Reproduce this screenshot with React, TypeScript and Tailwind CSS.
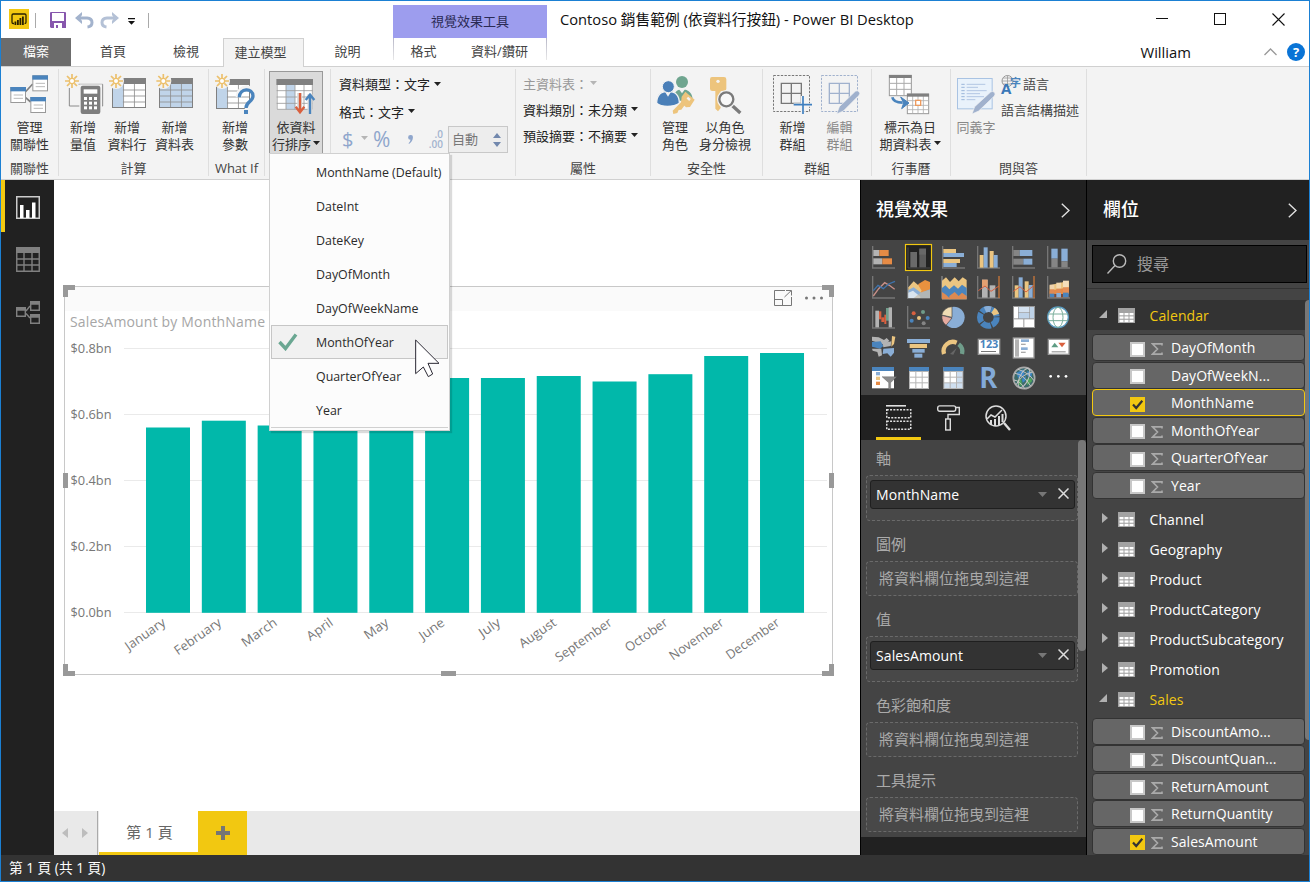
import React from 'react';

type Kids = { children?: React.ReactNode };

/* ---------- helpers ---------- */

function Art({ w, h, vb, children, cls = '' }: Kids & { w: number; h: number; vb: string; cls?: string }) {
  return (
    <svg width={w} height={h} viewBox={vb} className={`block shrink-0 overflow-visible ${cls}`} fill="none">
      {children}
    </svg>
  );
}

function Caret({ cls = 'text-[#222]' }: { cls?: string }) {
  return (
    <svg width="7" height="4" viewBox="0 0 7 4" className={`mb-[3px] inline-block shrink-0 ${cls}`}>
      <path d="M0 0H7L3.5 4Z" fill="currentColor" />
    </svg>
  );
}

/* ---------- ribbon icons (drawn at three units per pixel) ---------- */

function Burst({ x, y }: { x: number; y: number }) {
  return (
    <g transform={`translate(${x} ${y})`} stroke="#ecc06c" strokeWidth="5">
      <path d="M0 -21V-9M0 9V21M-21 0H-9M9 0H21M-15 -15L-7 -7M7 7L15 15M-15 15L-7 7M7 -7L15 -15" />
      <circle r="8" strokeWidth="4" fill="#fff" />
    </g>
  );
}

function MiniTable({ x, y, w, h, fill }: { x: number; y: number; w: number; h: number; fill: 'col' | 'all' }) {
  const c = (w - 4) / 3;
  const r = (h - 18) / 4;
  return (
    <g>
      <rect x={x} y={y} width={w} height={h} fill="#fff" />
      <rect x={x} y={y + 18} width={fill === 'all' ? w : c + 2} height={h - 18} fill="#c0d4e9" />
      <g stroke="#8f8f8f" strokeWidth="2.5">
        {[1, 2].map((i) => (
          <path key={i} d={`M${x + 2 + c * i} ${y + 18}V${y + h}`} />
        ))}
        {[1, 2, 3].map((i) => (
          <path key={i} d={`M${fill === 'all' ? x : x + c} ${y + 18 + r * i}H${x + w}`} />
        ))}
      </g>
      <rect x={x + 1.5} y={y + 1.5} width={w - 3} height={h - 3} stroke="#808080" strokeWidth="3" />
      <rect x={x} y={y} width={w} height="18" fill="#808080" />
    </g>
  );
}

const Relations = () => (
  <Art w={57} h={47} vb="3 213 171 141">
    <path d="M76 276L98 252M76 292L92 306" stroke="#808080" strokeWidth="5" />
    {[
      [31, 261],
      [97, 226],
      [91, 291],
    ].map(([x, y]) => (
      <g key={x}>
        <rect x={x + 1.5} y={y + 1.5} width="44" height="45" fill="#fff" stroke="#999" strokeWidth="3" />
        <rect x={x} y={y} width="47" height="13" fill="#4a84bd" />
        <path d={`M${x + 10} ${y + 24}H${x + 38}M${x + 10} ${y + 34}H${x + 38}`} stroke="#bbb" strokeWidth="3" />
      </g>
    ))}
  </Art>
);

const Measure = () => (
  <Art w={44} h={47} vb="183 213 132 141">
    <path d="M208 264V318H308V253H236" stroke="#8a8a8a" strokeWidth="3" />
    <rect x="238" y="253" width="68" height="90" fill="#f3f3f3" />
    <rect x="242" y="257" width="59" height="85" rx="6" fill="#7d7d7d" />
    <rect x="251" y="268" width="41" height="13" fill="#fff" />
    {[0, 1, 2].map((r) =>
      [0, 1, 2].map((c) => <rect key={`${r}${c}`} x={252 + c * 15} y={291 + r * 14} width="9" height="9" fill="#fff" />),
    )}
    <Burst x={216} y={243} />
  </Art>
);

const NewColumn = () => (
  <Art w={44} h={47} vb="315 213 132 141">
    <MiniTable x={336} y={234} w={102} h={90} fill="col" />
    <circle cx="348" cy="243" r="24" fill="#f3f3f3" />
    <Burst x={348} y={243} />
  </Art>
);

const NewTable = () => (
  <Art w={51} h={47} vb="447 213 153 141">
    <MiniTable x={477} y={234} w={102} h={90} fill="all" />
    <circle cx="490" cy="243" r="24" fill="#f3f3f3" />
    <Burst x={490} y={243} />
  </Art>
);

const NewParam = () => (
  <Art w={52} h={47} vb="627 213 156 141">
    <MiniTable x={648} y={237} w={102} h={90} fill="col" />
    <path d="M716 292C716 256 764 256 764 288C764 308 744 304 740 342" stroke="#f3f3f3" strokeWidth="18" />
    <circle cx="666" cy="243" r="24" fill="#f3f3f3" />
    <Burst x={666} y={243} />
    <path d="M718 292C718 264 759 262 759 288C759 306 738 304 738 324" stroke="#4a84bd" strokeWidth="10" />
    <rect x="732" y="330" width="12" height="12" fill="#4a84bd" />
  </Art>
);

const SortBy = () => (
  <Art w={52} h={46} vb="810 216 156 138">
    <rect x="830" y="237" width="108" height="92" fill="#fff" />
    <rect x="858" y="255" width="27" height="73" fill="#c0d4e9" />
    <path
      d="M830 272H938M830 291H938M830 310H938M858 255V328M885 255V328M912 255V328M831.5 255V328H937V255"
      stroke="#9a9a9a"
      strokeWidth="2.5"
    />
    <rect x="829" y="237" width="110" height="18" fill="#808080" />
    <path d="M899 279V332" stroke="#dadada" strokeWidth="15" />
    <path d="M930 282V342" stroke="#dadada" strokeWidth="15" />
    <path d="M900 279V336M887 320L900 337L913 320" stroke="#d9603f" strokeWidth="7" />
    <path d="M930 342V286M917 300L930 284L943 300" stroke="#4a84bd" strokeWidth="7" />
  </Art>
);

const ManageRoles = () => (
  <Art w={44} h={47} vb="9 33 132 141">
    <circle cx="96" cy="66" r="18" fill="#6fa58f" />
    <path d="M70 122C70 98 80 88 96 88C116 88 128 100 128 122Z" fill="#6fa58f" />
    <path d="M86 86L96 100L106 86Z" fill="#f3f3f3" />
    <path d="M20 130C20 105 30 94 54 94C80 94 88 108 88 130C70 142 34 142 20 130Z" fill="#4a7fb8" stroke="#f3f3f3" strokeWidth="4" />
    <path d="M44 94L54 110L64 94Z" fill="#f3f3f3" />
    <circle cx="55" cy="80" r="18" fill="#4a7fb8" stroke="#f3f3f3" strokeWidth="3" />
    <g fill="#edc47c">
      <path d="M106 95L134 119L120 141L108 142L93 128L95 110Z" />
      <path d="M96 124L68 152L70 162L82 159L86 150L94 149L104 136Z" />
    </g>
    <path d="M112 113L120 120" stroke="#f3f3f3" strokeWidth="7" />
  </Art>
);

const ViewAs = () => (
  <Art w={56} h={47} vb="141 33 168 141">
    <path d="M186 51H222Q229 51 229 58V86Q229 93 222 93H212V144L204 154L196 146V93H187Q180 93 180 86V58Q180 51 186 51Z" fill="#edc47c" />
    <circle cx="204" cy="64" r="5" fill="#f3f3f3" />
    <path d="M244 134L271 159" stroke="#7a7a7a" strokeWidth="10" />
    <circle cx="229" cy="118" r="28" fill="#f3f3f3" />
    <circle cx="229" cy="118" r="21" stroke="#7a7a7a" strokeWidth="7" fill="#f8f8f8" />
  </Art>
);

const NewGroup = () => (
  <Art w={47} h={47} vb="357 33 141 141">
    <rect x="370.5" y="46.5" width="108" height="108" stroke="#777" strokeWidth="3" strokeDasharray="7 4" />
    <path d="M394 70H454V130H394ZM424 70V130M394 100H454" stroke="#777" strokeWidth="4" />
    <path d="M458 108V162M431 135H486" stroke="#f3f3f3" strokeWidth="11" />
    <path d="M459 108V162M431 134H486" stroke="#3f7fbf" strokeWidth="5" />
  </Art>
);

const EditGroup = () => (
  <Art w={47} h={47} vb="498 33 141 141">
    <rect x="514.5" y="46.5" width="108" height="108" stroke="#a0b1cd" strokeWidth="3" strokeDasharray="7 4" />
    <path d="M538 70H598V130H538ZM568 70V130M538 100H598" stroke="#a0b1cd" strokeWidth="4" />
    <path d="M560 162L568 140L616 94Q622 90 627 95Q632 100 627 106L580 153Z" fill="#a0b1cd" stroke="#f3f3f3" strokeWidth="2" />
  </Art>
);

const MarkDate = () => (
  <Art w={77} h={47} vb="666 33 231 141">
    <rect x="718" y="46" width="66" height="61" fill="#fff" stroke="#999" strokeWidth="3" />
    <path d="M740 52V107M762 52V107M718 70H784M718 88H784" stroke="#aaa" strokeWidth="3" />
    <rect x="717" y="45" width="68" height="9" fill="#808080" />
    <rect x="772" y="102" width="64" height="59" fill="#fff" stroke="#999" strokeWidth="3" />
    <path d="M788 108V160M804 108V160M820 108V160M772 122H836M772 136H836M772 149H836" stroke="#b0b0b0" strokeWidth="2.5" />
    <rect x="771" y="101" width="66" height="9" fill="#808080" />
    <rect x="797" y="121" width="15" height="15" stroke="#ec9a5e" strokeWidth="4" fill="#fff" />
    <path d="M727 112Q730 128 758 128" stroke="#4a84bd" strokeWidth="8" />
    <path d="M752 111L777 129L755 146L761 129Z" fill="#4a84bd" stroke="#4a84bd" strokeWidth="3" />
  </Art>
);

const Synonyms = () => (
  <Art w={46} h={47} vb="909 33 138 141">
    <rect x="922.5" y="55.5" width="104" height="91" fill="#e9f2fb" stroke="#a9c3e3" strokeWidth="3" />
    <path d="M934 73H944M934 82H944M934 92H944M934 101H944M934 110H944M934 119H944" stroke="#9bb6da" strokeWidth="3" />
    <path d="M950 73H1006M950 82H984M950 92H1010M950 101H990M950 110H1002M950 119H976" stroke="#b2c7e3" strokeWidth="3" />
    <path d="M966 162L974 140L1022 96Q1028 92 1033 97Q1038 102 1033 108L986 153Z" fill="#a0b1cd" stroke="#f3f3f3" strokeWidth="2" />
  </Art>
);

/* ---------- ribbon layout ---------- */

function Group({ w, label, children }: Kids & { w: string; label?: string }) {
  return (
    <div className={`${w} flex shrink-0 flex-col pt-[2px]`}>
      <div className="flex h-[107px] flex-col border-r border-[#dedede]">
        <div className="flex h-[88px] shrink-0 pt-[2px]">{children}</div>
        <div className="flex h-[22px] shrink-0 items-center justify-center text-[13px] leading-none text-[#444]">{label}</div>
      </div>
    </div>
  );
}

function Tool({ icon, a, b, w, caret, dim }: { icon: React.ReactNode; a: string; b?: string; w: string; caret?: boolean; dim?: boolean }) {
  return (
    <div className={`${w} flex shrink-0 flex-col items-center`}>
      {icon}
      <div className={`flex flex-col items-center pt-px text-[13px] leading-[17px] whitespace-nowrap ${dim ? 'text-[#888]' : 'text-[#333]'}`}>
        <span>{a}</span>
        {b && (
          <span className="flex items-center gap-[2px]">
            {b}
            {caret && <Caret />}
          </span>
        )}
      </div>
    </div>
  );
}

const MENU = ['MonthName (Default)', 'DateInt', 'DateKey', 'DayOfMonth', 'DayOfWeekName', 'MonthOfYear', 'QuarterOfYear', 'Year'];

function SortMenu() {
  return (
    <div className="absolute top-[82px] left-0 z-20 h-[278px] w-[181px] border border-[#d0d0d0] bg-[#fcfcfc] px-px pt-px shadow-[2px_2px_1px_rgba(0,0,0,0.14)]">
      {MENU.map((m) => {
        const on = m === 'MonthOfYear';
        return (
          <div
            key={m}
            className={`flex h-[34px] items-center border text-[12.4px] text-[#2b2b2b] ${on ? 'border-[#c6c6c6] bg-[#f1f1f1]' : 'border-transparent'}`}
          >
            <div className="flex w-[44px] shrink-0 pl-[6px]">
              {on && (
                <svg width="20" height="18" viewBox="0 0 20 18" fill="none">
                  <path d="M1.5 9L7.5 15.5L18 1.5" stroke="#6aa792" strokeWidth="3.4" />
                </svg>
              )}
            </div>
            <span className="pt-[2px] whitespace-nowrap">{m}</span>
          </div>
        );
      })}
      <div className="border-t border-[#d0d0d0]" />
      <svg width="26" height="42" viewBox="1245 1017 78 126" className="absolute top-[185px] left-[145px]">
        <path d="M1247 1020L1317 1090H1284L1298 1122L1285 1130L1270 1101L1247 1121Z" fill="#fff" stroke="#2a2833" strokeWidth="3" />
      </svg>
    </div>
  );
}

function Ribbon() {
  return (
    <div className="flex h-[114px] border-y border-[#d0d0d0] bg-[#f3f3f3]">
      <Group w="w-[58px]" label="關聯性">
        <Tool w="w-[57px]" icon={<Relations />} a="管理" b="關聯性" />
      </Group>
      <Group w="w-[150px]" label="計算">
        <div className="flex pl-[2px]">
          <Tool w="w-[44px]" icon={<Measure />} a="新增" b="量值" />
          <Tool w="w-[44px]" icon={<NewColumn />} a="新增" b="資料行" />
          <Tool w="w-[51px]" icon={<NewTable />} a="新增" b="資料表" />
        </div>
      </Group>
      <Group w="w-[56px]" label="What If">
        <Tool w="w-[52px]" icon={<NewParam />} a="新增" b="參數" />
      </Group>
      <Group w="w-[66px]">
        <div className="relative ml-[4px] h-[83px] w-[54px] border border-[#999] bg-[#dadada]">
          <Tool w="w-[52px]" icon={<SortBy />} a="依資料" b="行排序" caret />
          <div className="absolute -top-px -left-px">
            <SortMenu />
          </div>
        </div>
      </Group>
      <Group w="w-[185px]">
        <div className="flex flex-col pl-[8px] text-[13px] text-[#222]">
          <div className="flex h-[27px] items-center gap-[4px] pt-px">
            資料類型：文字 <Caret />
          </div>
          <div className="flex h-[28px] items-center gap-[4px] pt-px">
            格式：文字 <Caret />
          </div>
          <div className="flex h-[27px] items-center text-[#a9b7d0]">
            <span className="w-[22px] pl-[3px] text-[20px] leading-none text-[#8fa6cc]">$</span>
            <Caret cls="text-[#b5b5b5]" />
            <span className="ml-[5px] w-[35px] text-[21px] leading-none text-[#8fa6cc]">%</span>
            <svg width="5" height="9" viewBox="0 0 5 9" fill="#8fa6cc" className="mr-[14px]">
              <path d="M2.500 0A2.300 2.300 0 0 1 4.900 2.600Q4.900 6.500 1 9L.6 8.200Q2.400 6.800 2.500 4.800A2.300 2.300 0 0 1 2.500 0Z" />
            </svg>
            <div className="flex w-[21px] flex-col items-end pt-[1px] pr-[4px] text-[10px] leading-[9px] font-semibold">
              <svg width="18" height="20" viewBox="0 0 18 20" fill="#a3b3cf" fontFamily="Open Sans" fontSize="10" fontWeight="600">
                <text x="17" y="8" textAnchor="end">
                  .0
                </text>
                <text x="17" y="17.500" textAnchor="end">
                  .00
                </text>
              </svg>
            </div>
            <div className="flex h-[27px] w-[60px] items-center justify-between border border-[#c8c8c8] bg-[#ededed] pr-[6px] pl-[3px] text-[13px] text-[#777]">
              自動
              <svg width="8" height="14" viewBox="0 0 8 14" fill="#7288ad">
                <path d="M0 5L4 0L8 5ZM0 9H8L4 14Z" />
              </svg>
            </div>
          </div>
        </div>
      </Group>
      <Group w="w-[135px]" label="屬性">
        <div className="flex flex-col pl-[7px] text-[13px] text-[#222]">
          <div className="flex h-[26px] items-center gap-[2px] pt-px text-[#999]">
            主資料表： <Caret cls="text-[#b5b5b5]" />
          </div>
          <div className="flex h-[26px] items-center gap-[4px] pt-px">
            資料類別：未分類 <Caret />
          </div>
          <div className="flex h-[26px] items-center gap-[4px] pt-px">
            預設摘要：不摘要 <Caret />
          </div>
        </div>
      </Group>
      <Group w="w-[112px]" label="安全性">
        <div className="flex pl-[2px]">
          <Tool w="w-[44px]" icon={<ManageRoles />} a="管理" b="角色" />
          <Tool w="w-[56px]" icon={<ViewAs />} a="以角色" b="身分檢視" />
        </div>
      </Group>
      <Group w="w-[109px]" label="群組">
        <div className="flex pl-[6px]">
          <Tool w="w-[47px]" icon={<NewGroup />} a="新增" b="群組" />
          <Tool w="w-[47px]" icon={<EditGroup />} a="編輯" b="群組" dim />
        </div>
      </Group>
      <Group w="w-[79px]" label="行事曆">
        <Tool w="w-[76px]" icon={<MarkDate />} a="標示為日" b="期資料表" caret />
      </Group>
      <Group w="w-[136px]" label="問與答">
        <div className="flex pl-[2px]">
          <Tool w="w-[46px]" icon={<Synonyms />} a="同義字" dim />
          <div className="flex flex-col pl-[2px] text-[13px] text-[#444]">
            <div className="flex h-[26px] items-center gap-[3px] pt-px">
              <svg width="19" height="20" viewBox="0 0 19 20" fill="none" className="overflow-visible">
                <circle cx="6.5" cy="6" r="5.5" stroke="#999" />
                <path d="M1 6H12M6.5 .5V11.5M2 3H11M2 9H11" stroke="#999" strokeWidth=".8" />
                <text x="0" y="18.5" fontSize="15" fontWeight="700" fill="#3b78b8" fontFamily="Open Sans">
                  A
                </text>
                <text x="9" y="12" fontSize="11" fontWeight="700" fill="#4a84bd" fontFamily="Noto Sans CJK TC">
                  字
                </text>
              </svg>
              語言
            </div>
            <div className="flex h-[27px] items-center">語言結構描述</div>
          </div>
        </div>
      </Group>
    </div>
  );
}

/* ---------- title bar and tabs ---------- */

function TitleBar() {
  return (
    <div className="flex h-[37px] bg-white">
      <div className="flex w-[392px] items-start pt-[8px] pl-[8px]">
        <svg width="20" height="20" viewBox="0 0 20 20">
          <rect width="20" height="20" fill="#f2c811" />
          <path d="M5 14.5H4.2Q3 14.5 3 13.2V6.2Q3 5 4.2 5H15.8Q17 5 17 6.2V13.2Q17 14.5 15.6 14.5" fill="none" stroke="#2a2200" strokeWidth="1.3" />
          <path d="M5.5 12.5H7.3V16H5.5ZM8 11H9.8V16H8ZM10.5 9H12.3V16H10.5ZM13 7.5H14.8V16H13Z" fill="#2a2200" />
        </svg>
        <div className="mt-[4px] ml-[6px] h-[15px] w-px bg-[#aaa]" />
        <svg width="16" height="16" viewBox="0 0 16 16" className="mt-[3px] ml-[14px]">
          <path d="M0 1Q0 0 1 0H15Q16 0 16 1V16H1L0 15Z" fill="#8757ad" />
          <rect x="2" y="1" width="12" height="8" fill="#fff" />
          <path d="M4 11H12V16H8V13H6V16H4Z" fill="#fff" />
        </svg>
        <svg width="20" height="18" viewBox="0 0 20 18" fill="none" className="mt-[3px] ml-[9px]">
          <path d="M2 6H12Q17 6.500 17 10.500Q17 14.500 12.500 15" stroke="#a3b3cd" strokeWidth="3" />
          <path d="M0 6L7 0V3L5 6L7 9V12Z" fill="#a3b3cd" />
        </svg>
        <svg width="20" height="18" viewBox="0 0 20 18" fill="none" className="mt-[3px] ml-[5px]">
          <path d="M17 6H7Q2 6.500 2 10.500Q2 14.500 6.500 15" stroke="#b4c1d6" strokeWidth="3" />
          <path d="M19 6L12 0V3L14 6L12 9V12Z" fill="#b4c1d6" />
        </svg>
        <svg width="7" height="7" viewBox="0 0 7 7" className="mt-[9px] ml-[8px]">
          <path d="M0 0H7V1.200H0ZM0 3H7L3.500 6.800Z" fill="#111" />
        </svg>
        <div className="mt-[4px] ml-[13px] h-[15px] w-px bg-[#aaa]" />
      </div>
      <div className="mt-[4px] flex w-[154px] items-center justify-center bg-[#9d9dee] text-[13px] text-[#2b2b55]">視覺效果工具</div>
      <div className="pt-[6px] pl-[13px] text-[14.7px] leading-[24px] whitespace-nowrap text-[#111]">Contoso 銷售範例 (依資料行按鈕) - Power BI Desktop</div>
      <div className="ml-auto flex gap-[46px] pt-[12px] pr-[23px]">
        <svg width="12" height="12" viewBox="0 0 12 12" className="-ml-px">
          <path d="M0 5.500H12" stroke="#111" />
        </svg>
        <svg width="12" height="12" viewBox="0 0 12 12" fill="none">
          <rect x=".5" y=".5" width="11" height="11" stroke="#111" />
        </svg>
        <svg width="13" height="13" viewBox="0 0 13 13" className="mr-px">
          <path d="M.5 .5L12.500 12.500M12.500 .5L.5 12.500" stroke="#111" strokeWidth="1.100" />
        </svg>
      </div>
    </div>
  );
}

function TabRow() {
  const tab = 'flex h-[28px] shrink-0 items-center justify-center';
  return (
    <div className="relative z-10 -mb-px flex h-[29px] bg-transparent text-[13px] text-[#444]">
      <div className={`${tab} w-[70px] bg-[#6c6c6c] text-white`}>檔案</div>
      <div className={`${tab} w-[84px]`}>首頁</div>
      <div className={`${tab} w-[62px]`}>檢視</div>
      <div className="ml-[6px] flex h-[29px] w-[81px] shrink-0 items-center justify-center border border-b-0 border-[#d0d0d0] bg-[#f3f3f3] pr-[6px] pb-px">建立模型</div>
      <div className={`${tab} w-[87px]`}>說明</div>
      <div className={`${tab} ml-[2px] w-[154px] justify-start`}>
        <div className="mb-[6px] h-[22px] w-px bg-linear-to-b from-[#b8b8c8] to-[#e8e8e8]" />
        <span className="w-[59px] text-center">格式</span>
        <span className="w-[93px] text-center">資料/鑽研</span>
        <div className="mb-[6px] h-[22px] w-px bg-linear-to-b from-[#b8b8c8] to-[#e8e8e8]" />
      </div>
      <div className="ml-auto flex h-[28px] items-center pr-[4px]">
        <span className="text-[14.8px] text-[#111]">William</span>
        <svg width="13" height="8" viewBox="0 0 13 8" fill="none" className="ml-[73px]">
          <path d="M.5 7L6.500 1L12.500 7" stroke="#999" strokeWidth="1.300" />
        </svg>
        <div className="ml-[10px] flex size-[18px] items-center justify-center rounded-full bg-[#0a74d6] text-[13px] leading-none font-bold text-white">?</div>
      </div>
    </div>
  );
}

/* ---------- report canvas ---------- */

const BARS: [string, number, number][] = [
  ['January', 427.5, 46],
  ['February', 420.7, 54],
  ['March', 425.5, 40],
  ['April', 428, 29],
  ['May', 426, 27],
  ['June', 378, 28],
  ['July', 378, 23],
  ['August', 376, 42],
  ['September', 381.5, 66],
  ['October', 374.2, 49],
  ['November', 356, 63],
  ['December', 353, 62],
];

function Handles() {
  return (
    <>
      <div className="absolute -top-[2px] -left-[2px] size-[12px] border-t-[5px] border-l-[5px] border-[#999]" />
      <div className="absolute -top-[2px] -right-[2px] size-[12px] border-t-[5px] border-r-[5px] border-[#999]" />
      <div className="absolute -bottom-[2px] -left-[2px] size-[12px] border-b-[5px] border-l-[5px] border-[#999]" />
      <div className="absolute -right-[2px] -bottom-[2px] size-[12px] border-r-[5px] border-b-[5px] border-[#999]" />
      <div className="absolute top-[186px] -left-[2px] h-[15px] w-[5px] bg-[#999]" />
      <div className="absolute top-[186px] -right-[2px] h-[15px] w-[5px] bg-[#999]" />
      <div className="absolute -bottom-[2px] left-[376px] h-[5px] w-[15px] bg-[#999]" />
    </>
  );
}

function Chart() {
  return (
    <div className="relative mt-[106px] ml-[10px] h-[389px] w-[769px] shrink-0 border border-[#c8c8c8] bg-white">
      <div className="flex h-[24px] items-start justify-end bg-[#fafafa] pt-[3px] pr-[8px]">
        <svg width="18" height="16" viewBox="0 0 18 16" fill="none" stroke="#777">
          <path d="M11 .5H.5V15.500H17.500V7M.5 9.500H8.500V15.500M12 .5H17.500V5.500M10.500 7L17 .8" />
        </svg>
        <svg width="20" height="4" viewBox="0 0 20 4" fill="#777" className="mt-[6px] ml-[12px]">
          <circle cx="2.500" cy="2" r="1.500" />
          <circle cx="10" cy="2" r="1.500" />
          <circle cx="17.500" cy="2" r="1.500" />
        </svg>
      </div>
      <div className="flex h-[22px] items-center pb-[2px] pl-[5px] text-[14px] tracking-[0.17px] whitespace-nowrap text-[#a6a6a6]">SalesAmount by MonthName</div>
      <svg width="767" height="341" viewBox="65 333 767 341" className="block" fontFamily="Open Sans" fontSize="12.500" fill="#777">
        {['$0.8bn', '$0.6bn', '$0.4bn', '$0.2bn', '$0.0bn'].map((t, i) => (
          <g key={t}>
            <path d={`M124 ${348.5 + i * 66}H827`} stroke="#eaeaea" />
            <text x="70.500" y={353 + i * 66} textLength="41" lengthAdjust="spacingAndGlyphs">
              {t}
            </text>
          </g>
        ))}
        {BARS.map(([name, top, len], i) => {
          const x = 146 + i * 55.82;
          return (
            <g key={name}>
              <rect x={x} y={top} width="44" height={612.8 - top} fill="#01b8aa" />
              <text
                transform={`translate(${x + 20.5} 624.5) rotate(-35)`}
                textAnchor="end"
                textLength={len}
                lengthAdjust="spacingAndGlyphs"
                fontSize="12.800"
              >
                {name}
              </text>
            </g>
          );
        })}
      </svg>
      <Handles />
    </div>
  );
}

function PageTabs() {
  return (
    <div className="mt-auto flex h-[44px] shrink-0 bg-[#e9e9e9]">
      <div className="flex w-[44px] items-center gap-[14px] border-r border-[#aaa] pl-[8px]">
        <svg width="6" height="10" viewBox="0 0 6 10" fill="#bdbdbd">
          <path d="M6 0V10L0 5Z" />
        </svg>
        <svg width="6" height="10" viewBox="0 0 6 10" fill="#bdbdbd">
          <path d="M0 0V10L6 5Z" />
        </svg>
      </div>
      <div className="ml-px flex w-[99px] items-center justify-center border-b-[3px] border-[#f2c811] bg-white pt-[2px] pl-[2px] text-[15px] text-[#666]">第 1 頁</div>
      <div className="flex w-[49px] items-center justify-center bg-[#f2c811]">
        <svg width="14" height="14" viewBox="0 0 14 14">
          <path d="M7 0V14M0 7H14" stroke="#757575" strokeWidth="4" />
        </svg>
      </div>
    </div>
  );
}

function ViewNav() {
  return (
    <div className="flex w-[53px] shrink-0 flex-col bg-[#212121]">
      <div className="flex h-[52px] items-center border-l-4 border-[#f2c811] pl-[11px]">
        <svg width="24" height="23" viewBox="0 0 24 23" className="mt-[3px]">
          <rect x=".75" y=".75" width="22.500" height="21.500" fill="none" stroke="#ccc" strokeWidth="1.500" />
          <path d="M4 9H7.500V22H4ZM10 14H13.500V22H10ZM16 6.500H19.500V22H16Z" fill="#fff" />
        </svg>
      </div>
      <div className="flex h-[52px] items-center pl-[15px]">
        <svg width="24" height="25" viewBox="0 0 24 25" className="mt-[3px]" fill="none" stroke="#808080">
          <path d="M.75 1V24.250H23.250V1M8 6V24M16 6V24M1 12H23M1 18H23" strokeWidth="1.400" />
          <rect width="24" height="6" fill="#808080" stroke="none" />
        </svg>
      </div>
      <div className="flex h-[54px] items-center pl-[15px]">
        <svg width="24" height="23" viewBox="0 0 24 23" className="mt-[2px]" fill="none" stroke="#808080" strokeWidth="1.400">
          <path d="M10 10L14 5M10 12.500L14 17" />
          <path d="M.7 6.700H9.300V15.300H.7ZM14.700 .7H23.300V9.300H14.700ZM14.700 13.700H23.300V22.300H14.700Z" />
          <path d="M0 8H10M14 2H24M14 15H24" strokeWidth="3.500" />
        </svg>
      </div>
    </div>
  );
}

/* ---------- visualization gallery (69 units = 23 px) ---------- */

const AX = <path d="M2 0V66H69" stroke="#767676" strokeWidth="4" fill="none" />;
const B = '#8aaed6';
const DB = '#4a84bd';
const Y = '#ebc581';
const O = '#e68b45';
const G = '#b3b3b3';

function R({ d, f }: { d: number[]; f: string }) {
  return <rect x={d[0]} y={d[1]} width={d[2]} height={d[3]} fill={f} />;
}

const VISUALS: React.ReactNode[] = [
  <>
    {AX}
    <R d={[4, 12, 18, 18]} f={G} />
    <R d={[22, 12, 28, 18]} f={O} />
    <R d={[4, 37, 27, 18]} f={G} />
    <R d={[31, 37, 29, 18]} f={O} />
  </>,
  <>
    <rect x="-4.500" y="-4.500" width="78" height="78" fill="#222" stroke="#f2c811" strokeWidth="3.500" />
    <path d="M3 4V66H69" stroke="#4a4a4a" strokeWidth="3" fill="none" />
    <R d={[10, 18, 20, 46]} f="#6a6a6a" />
    <R d={[37, 8, 20, 56]} f="#5c5c5c" />
    <R d={[37, 8, 20, 18]} f="#686868" />
  </>,
  <>
    {AX}
    <R d={[4, 9, 38, 12]} f={Y} />
    <R d={[4, 21, 62, 12]} f={B} />
    <R d={[4, 39, 50, 12]} f={Y} />
    <R d={[4, 51, 40, 12]} f={B} />
  </>,
  <>
    {AX}
    <R d={[8, 27, 12, 38]} f={Y} />
    <R d={[20, 4, 12, 61]} f={B} />
    <R d={[38, 15, 12, 50]} f={Y} />
    <R d={[50, 27, 12, 38]} f={B} />
  </>,
  <>
    {AX}
    <R d={[4, 12, 19, 18]} f="#858585" />
    <R d={[23, 12, 38, 18]} f={B} />
    <R d={[4, 38, 30, 18]} f="#858585" />
    <R d={[34, 38, 27, 18]} f={B} />
  </>,
  <>
    {AX}
    <R d={[13, 8, 19, 30]} f={B} />
    <R d={[13, 38, 19, 26]} f="#858585" />
    <R d={[43, 8, 19, 38]} f={B} />
    <R d={[43, 46, 19, 18]} f="#858585" />
  </>,
  <>
    {AX}
    <path d="M4 60L20 38L38 20L52 28L68 40" stroke="#c99088" strokeWidth="4" fill="none" />
    <path d="M4 44L18 28L34 38L50 24L69 16" stroke="#3f74ad" strokeWidth="4" fill="none" />
  </>,
  <>
    {AX}
    <path d="M28 66V30L38 22L54 12L69 18V66Z" fill="#e9913f" />
    <path d="M4 66V34L20 16L34 28L44 44L30 66Z" fill={Y} />
    <path d="M4 66V42L20 34L42 50L69 40V66Z" fill={B} />
    <path d="M4 50L18 44L40 62V66H4Z" fill="#d9e4ee" />
    <path d="M20 66L44 48L69 42V66Z" fill="#c2b9a8" opacity=".7" />
  </>,
  <>
    <R d={[-2, 0, 4, 68]} f="#8a8a8a" />
    <path d="M0 14L12 4L24 18L38 4L50 16L62 4L74 12V70H0Z" fill={Y} />
    <path d="M0 36L10 28L22 40L36 28L48 38L60 26L74 36V70H0Z" fill={DB} />
    <path d="M0 70V48L12 56L26 70Z" fill="#dd8a52" />
    <path d="M22 60L38 48L50 60L60 50L74 60V70H22Z" fill="#dd8a52" />
  </>,
  <>
    {AX}
    <R d={[15, 11, 17, 54]} f={G} />
    <R d={[15, 11, 17, 22]} f="#e5a071" />
    <R d={[38, 28, 17, 37]} f={G} />
    <path d="M4 44L24 30L42 46L66 30" stroke="#d9603f" strokeWidth="3" fill="none" />
    <R d={[64, 0, 4, 66]} f="#c8763a" />
  </>,
  <>
    {AX}
    <R d={[8, 28, 12, 37]} f={Y} />
    <R d={[20, 4, 12, 61]} f={B} />
    <R d={[38, 16, 12, 49]} f={Y} />
    <R d={[50, 27, 12, 38]} f={B} />
    <path d="M4 46L24 32L42 48L66 28" stroke="#d9603f" strokeWidth="3" fill="none" />
    <R d={[64, 0, 4, 66]} f="#c8763a" />
  </>,
  <>
    {AX}
    <path d="M8 28L66 14V64H8Z" fill={Y} />
    <path d="M8 44L66 34V64H8Z" fill={O} />
    <path d="M8 54H66V64H8Z" fill="#7a4a3c" />
    <R d={[8, 26, 14, 14]} f="#f0d3ac" />
    <R d={[8, 40, 14, 13]} f="#e08a55" />
    <R d={[8, 53, 14, 11]} f={DB} />
    <R d={[28, 20, 14, 18]} f="#f3d9b0" />
    <R d={[28, 38, 14, 13]} f="#e08a55" />
    <R d={[28, 51, 14, 13]} f={B} />
    <R d={[48, 14, 17, 20]} f="#f6dfbb" />
    <R d={[48, 34, 17, 16]} f="#e58f58" />
    <R d={[48, 50, 17, 14]} f={DB} />
  </>,
  <>
    {AX}
    <R d={[10, 14, 11, 50]} f={G} />
    <R d={[21, 16, 7, 24]} f="#d9603f" />
    <R d={[28, 34, 9, 14]} f="#d9603f" />
    <R d={[37, 26, 6, 28]} f="#d9603f" />
    <R d={[42, 6, 9, 38]} f="#6f9c8a" />
    <R d={[50, 4, 10, 60]} f={G} />
  </>,
  <>
    {AX}
    {[
      [20, 22, '#d9603f'],
      [48, 18, '#6f9c8a'],
      [36, 36, Y],
      [14, 44, DB],
      [62, 36, DB],
      [50, 52, '#858585'],
    ].map(([x, y, f]) => (
      <circle key={`${x}-${y}`} cx={x} cy={y} r="6" fill={f as string} />
    ))}
  </>,
  <>
    <circle cx="36" cy="34" r="32" fill={B} />
    <path d="M30 34L-1 27A32 32 0 0 1 30 2Z" fill="#f0dcb4" stroke="#444" strokeWidth="2" />
    <path d="M30 36L0 28A32 32 0 0 0 12 58Z" fill="#e6aba0" stroke="#444" strokeWidth="2" />
  </>,
  <>
    <circle cx="34" cy="34" r="25" stroke={DB} strokeWidth="18" fill="none" strokeDasharray="28 3.400" />
    <path d="M48 13A25 25 0 0 1 58 26" stroke={Y} strokeWidth="18" fill="none" />
    <path d="M24 11A25 25 0 0 1 42 10" stroke={B} strokeWidth="18" fill="none" />
  </>,
  <>
    <R d={[3, 0, 66, 66]} f="#999" />
    <R d={[6, 3, 12, 34]} f="#fff" />
    <R d={[20, 3, 32, 16]} f="#d4e1ef" />
    <R d={[54, 3, 12, 34]} f="#bfd3e8" />
    <R d={[20, 21, 32, 16]} f="#bfd3e8" />
    <R d={[6, 40, 28, 23]} f="#fff" />
    <R d={[37, 40, 29, 23]} f="#fff" />
  </>,
  <>
    <circle cx="33" cy="34" r="31" fill="#fff" stroke="#5a9bc0" strokeWidth="4" />
    <path d="M3 24H63M3 44H63" stroke="#78ad9a" strokeWidth="3" />
    <ellipse cx="33" cy="34" rx="15" ry="30" stroke="#78ad9a" strokeWidth="3" fill="none" />
  </>,
  <>
    <path d="M0 2L20 4L36 12L44 6L52 14L40 26L22 22L0 14Z" fill={G} />
    <path d="M0 18L26 16L34 30L24 38L0 32Z" fill={DB} />
    <path d="M0 38L28 38L30 58L20 62L16 48L2 44Z" fill={G} />
    <path d="M32 22L58 16L56 30L34 34Z" fill={G} />
    <path d="M34 38L66 36V50L56 62L46 52L32 54Z" fill={B} />
    <path d="M60 0L70 2L66 24L58 32Z" fill={Y} />
  </>,
  <>
    <R d={[0, 9, 69, 12]} f={B} />
    <R d={[8, 24, 52, 12]} f={Y} />
    <R d={[16, 39, 37, 11]} f={B} />
    <R d={[22, 53, 24, 12]} f={B} />
  </>,
  <>
    <path d="M6 54A28 28 0 0 1 44 20" stroke={Y} strokeWidth="13" fill="none" />
    <path d="M50 25A28 28 0 0 1 60 54" stroke="#6f9c8a" strokeWidth="13" fill="none" />
    <path d="M24 54L44 36L34 56Z" fill="#666" />
  </>,
  <>
    <rect x="4" y="10" width="64" height="45" fill="#fff" stroke="#999" strokeWidth="4" />
    <text x="36" y="37" textAnchor="middle" fontSize="30" fontWeight="700" fill={DB} fontFamily="Open Sans" textLength="56" lengthAdjust="spacingAndGlyphs">
      123
    </text>
    <R d={[12, 45, 45, 3]} f="#777" />
  </>,
  <>
    <rect x="4" y="6" width="62" height="60" fill="#fff" stroke="#999" strokeWidth="4" />
    <R d={[9, 10, 12, 52]} f={G} />
    <R d={[27, 10, 24, 8]} f={B} />
    <R d={[27, 23, 14, 4]} f="#aaa" />
    <R d={[27, 34, 20, 8]} f={B} />
    <R d={[27, 47, 14, 4]} f="#aaa" />
  </>,
  <>
    <rect x="4" y="10" width="62" height="45" fill="#fff" stroke="#999" strokeWidth="4" />
    <path d="M13 34H34L23 20Z" fill="#5f9c84" />
    <path d="M34 20H56L45 34Z" fill="#d9603f" />
    <R d={[14, 46, 42, 3]} f="#888" />
  </>,
  <>
    <R d={[0, 3, 66, 64]} f="#fff" />
    <R d={[0, 3, 66, 12]} f={DB} />
    <R d={[12, 18, 12, 10]} f={B} />
    <R d={[12, 32, 12, 10]} f={Y} />
    <R d={[12, 47, 12, 10]} f={O} />
    <path d="M30 32H74L56 50V70H50V50Z" fill="#8c8c8c" stroke="#555" />
  </>,
  <>
    <R d={[6, 3, 60, 66]} f="#b5b5b5" />
    <R d={[6, 3, 60, 12]} f={DB} />
    {[0, 1, 2].map((r) => [0, 1, 2].map((c) => <R key={`${r}${c}`} d={[9 + c * 19, 18 + r * 17, 16, 14]} f="#fff" />))}
  </>,
  <>
    <R d={[4, 3, 60, 66]} f="#b5b5b5" />
    <R d={[4, 3, 60, 12]} f={DB} />
    {[0, 1, 2].map((r) =>
      [0, 1, 2].map((c) => <R key={`${r}${c}`} d={[7 + c * 19, 18 + r * 17, 16, 14]} f={c === 2 || r === 2 ? '#cfdff0' : '#fff'} />),
    )}
  </>,
  <>
    <text x="7" y="67" fontSize="86" fontWeight="700" fill="#83aad8" fontFamily="Open Sans" textLength="54" lengthAdjust="spacingAndGlyphs">
      R
    </text>
  </>,
  <>
    <circle cx="36" cy="36" r="32" fill="#3d6b6b" stroke="#a9a9a9" strokeWidth="5" />
    <path d="M14 20L34 10L38 28L18 36ZM46 14L60 22L58 34L46 30Z" fill="#3b86c6" />
    <path d="M42 40L58 36L60 46L46 58ZM14 44L28 40L30 60L20 56Z" fill="#4ea65a" />
    <path d="M30 38L42 30L40 44L32 50Z" fill="#3b86c6" />
    <g stroke="#c4c4c4" strokeWidth="3" fill="none">
      <ellipse cx="36" cy="36" rx="13" ry="31" transform="rotate(25 36 36)" />
      <path d="M8 22Q34 24 56 60M18 10Q50 20 66 44M6 42Q24 44 38 68M62 18Q30 24 12 56" />
    </g>
  </>,
  <>
    <circle cx="11" cy="31" r="4" fill="#fff" />
    <circle cx="34" cy="31" r="4" fill="#fff" />
    <circle cx="57" cy="31" r="4" fill="#fff" />
  </>,
];

/* ---------- side panels ---------- */

function PanelHead({ title, pad }: { title: string; pad: string }) {
  return (
    <div className={`flex h-[60px] shrink-0 items-center justify-between bg-[#212121] ${pad}`}>
      <span className="pb-[2px] text-[18px] leading-none font-medium text-white">{title}</span>
      <svg width="9" height="15" viewBox="0 0 9 15" fill="none">
        <path d="M.8 .8L8 7.500L.8 14.200" stroke="#e0e0e0" strokeWidth="1.400" />
      </svg>
    </div>
  );
}

function Well({ label, value, first }: { label: string; value?: string; first?: boolean }) {
  return (
    <div className="flex shrink-0 flex-col">
      <div className={`${first ? 'h-[35px]' : 'h-[40px]'} flex items-end pb-[7px] pl-[10px] text-[15px] leading-[20px] text-[#aaa]`}>{label}</div>
      {value ? (
        <div className="h-[46px] w-[212px] rounded border border-dashed border-[#6a6a6a] bg-[#484848] pt-[4px] pr-[2px] pl-[3px]">
          <div className="flex h-[29px] items-center rounded-[3px] border border-[#1f1f1f] bg-[#333] pr-[5px] pl-[5px]">
            <span className="text-[14px] tracking-[0.1px] text-white">{value}</span>
            <svg width="9" height="5" viewBox="0 0 9 5" className="ml-auto">
              <path d="M0 0H9L4.500 5Z" fill="#777" />
            </svg>
            <svg width="11" height="11" viewBox="0 0 11 11" className="mb-[3px] ml-[11px]">
              <path d="M.5 .5L10.500 10.500M10.500 .5L.5 10.500" stroke="#ddd" strokeWidth="1.500" />
            </svg>
          </div>
        </div>
      ) : (
        <div className="flex h-[35px] w-[212px] items-center rounded border border-dashed border-[#6a6a6a] bg-[#484848] pl-[12px] text-[15px] text-[#aaa]">
          將資料欄位拖曳到這裡
        </div>
      )}
    </div>
  );
}

function VisualPanel() {
  return (
    <div className="flex w-[227px] shrink-0 flex-col border-x border-black bg-[#212121]">
      <PanelHead title="視覺效果" pad="pl-[15px] pr-[16px]" />
      <div className="grid h-[155px] shrink-0 grid-cols-[repeat(6,35px)] grid-rows-[repeat(5,30px)] bg-[#444] pt-[6px] pl-[11px]">
        {VISUALS.map((v, i) => (
          <Art key={i} w={23} h={23} vb="0 0 69 69">
            {v}
          </Art>
        ))}
      </div>
      <div className="flex h-[45px] shrink-0 bg-[#212121] pl-[15px]">
        <div className="flex w-[45px] flex-col items-center justify-between border-b-[3px] border-[#f2c811] pt-[10px]">
          <svg width="26" height="26" viewBox="0 0 26 26" fill="none" stroke="#e0e0e0">
            <path d="M0 .8H20" strokeWidth="1.600" />
            <rect x=".75" y="4.750" width="24" height="8" strokeWidth="1.500" strokeDasharray="2 1.300" />
            <rect x=".75" y="16.250" width="24" height="8" strokeWidth="1.500" strokeDasharray="2 1.300" />
          </svg>
        </div>
        <svg width="24" height="26" viewBox="0 0 24 26" fill="none" stroke="#ddd" strokeWidth="1.400" className="mt-[10px] ml-[16px]">
          <rect x=".7" y=".9" width="18" height="5.400" rx="2" />
          <path d="M18.700 2.500H22.300V9.500H11V14" />
          <rect x="8.700" y="14" width="4.600" height="11" />
        </svg>
        <svg width="26" height="26" viewBox="0 0 26 26" fill="none" stroke="#ddd" strokeWidth="1.500" className="mt-[10px] ml-[24px]">
          <circle cx="11" cy="11" r="10" />
          <path d="M19 18L25 25" strokeWidth="2.400" />
          <path d="M2 14L6 10L10 12L17 5" />
          <path d="M6 20V15M10 21V14M14 20V11M17.500 17V9" strokeWidth="2" />
        </svg>
      </div>
      <div className="relative flex h-[397px] shrink-0 flex-col bg-[#444] pl-[5px]">
        <Well label="軸" value="MonthName" first />
        <Well label="圖例" />
        <Well label="值" value="SalesAmount" />
        <Well label="色彩飽和度" />
        <Well label="工具提示" />
        <div className="absolute top-0 right-0 h-[211px] w-[8px] rounded-full bg-[#777]" />
      </div>
    </div>
  );
}

type Field = [string, boolean, boolean?];
const CAL: Field[] = [
  ['DayOfMonth', true],
  ['DayOfWeekN...', false],
  ['MonthName', false, true],
  ['MonthOfYear', true],
  ['QuarterOfYear', true],
  ['Year', true],
];
const SALES: Field[] = [
  ['DiscountAmo...', true],
  ['DiscountQuan...', true],
  ['ReturnAmount', true],
  ['ReturnQuantity', true],
  ['SalesAmount', true, true],
];

function FieldRows({ rows, outlined }: { rows: Field[]; outlined?: string }) {
  return (
    <div className="flex shrink-0 flex-col gap-[0.5px] pt-[4px] pb-[6px] pl-[5px]">
      {rows.map(([name, sum, on]) => (
        <div
          key={name}
          className={`flex h-[27px] w-[213px] shrink-0 items-center rounded-[4px] border bg-[#666] ${name === outlined ? 'border-[#f2c811]' : 'border-[#333]'}`}
        >
          <div className={`mt-[3px] ml-[37px] size-[15px] shrink-0 ${on ? 'bg-[#f2c811]' : 'border-[2.500px] border-[#c8c8c8] bg-white'}`}>
            {on && (
              <svg width="15" height="15" viewBox="0 0 15 15" fill="none">
                <path d="M3 7.500L6.200 11L12.300 3.800" stroke="#333" strokeWidth="2.200" />
              </svg>
            )}
          </div>
          <svg width="12" height="12" viewBox="0 0 12 12" fill="none" className="mt-[3px] ml-[6px] shrink-0">
            {sum && <path d="M11 2.500V.9H1.500L6.500 6L1.500 11.100H11V9.500" stroke="#aaa" strokeWidth="1.600" />}
          </svg>
          <span className="ml-[8px] text-[14px] tracking-[0.06px] text-white">{name}</span>
        </div>
      ))}
    </div>
  );
}

function TableRow({ name, open, hot }: { name: string; open?: boolean; hot?: boolean }) {
  return (
    <div className={`flex h-[30px] shrink-0 items-center ${hot ? 'bg-[#333]' : ''}`}>
      <div className="flex w-[31px] pb-[3px] pl-[12px]">
        <svg width="8" height="10" viewBox="0 0 8 10" fill="#b0b0b0" className={open ? '' : 'ml-[3px]'}>
          <path d={open ? 'M8 1V9H0Z' : 'M0 0L6 5L0 10Z'} />
        </svg>
      </div>
      <svg width="17" height="15" viewBox="0 0 17 15">
        <rect width="17" height="15" fill="#a3a3a3" />
        {[0, 1, 2].map((r) => [0, 1, 2].map((c) => <rect key={`${r}${c}`} x={1.500 + c * 5} y={5 + r * 3.400} width="4" height="2.300" fill="#fff" />))}
      </svg>
      <span className={`ml-[14.500px] text-[14px] tracking-[0.1px] ${open ? 'text-[#f2c811]' : 'text-white'}`}>{name}</span>
    </div>
  );
}

function FieldsPanel() {
  return (
    <div className="flex min-w-0 flex-1 flex-col overflow-hidden bg-[#444]">
      <PanelHead title="欄位" pad="pl-[16px] pr-[12px]" />
      <div className="mt-[5px] ml-[5px] flex h-[38px] w-[215px] shrink-0 items-center border border-black bg-[#212121] pl-[14px]">
        <svg width="20" height="20" viewBox="0 0 20 20" fill="none" stroke="#bbb" strokeWidth="1.400">
          <circle cx="12.500" cy="7" r="6.200" />
          <path d="M8 11.500L.5 19.500" />
        </svg>
        <span className="ml-[10px] text-[16px] text-[#999]">搜尋</span>
      </div>
      <div className="mt-[5px] h-px shrink-0 bg-[#333]" />
      <div className="relative mt-[11px] flex min-h-0 flex-1 flex-col overflow-hidden">
        <TableRow name="Calendar" open hot />
        <FieldRows rows={CAL} outlined="MonthName" />
        <TableRow name="Channel" />
        <TableRow name="Geography" />
        <TableRow name="Product" />
        <TableRow name="ProductCategory" />
        <TableRow name="ProductSubcategory" />
        <TableRow name="Promotion" />
        <TableRow name="Sales" open />
        <div className="-mt-px flex flex-col">
          <FieldRows rows={SALES} />
        </div>
        <div className="absolute top-0 right-0 h-[440px] w-[4px] rounded-l-full bg-[#777]" />
      </div>
    </div>
  );
}

export default function App() {
  return (
    <div className="flex h-[882px] w-[1310px] flex-col overflow-hidden border border-[#1b80d3] bg-white font-['Open_Sans','Noto_Sans_CJK_TC',sans-serif]">
      <TitleBar />
      <TabRow />
      <Ribbon />
      <div className="flex h-[675px] shrink-0">
        <ViewNav />
        <div className="flex w-[806px] shrink-0 flex-col bg-white">
          <Chart />
          <PageTabs />
        </div>
        <VisualPanel />
        <FieldsPanel />
      </div>
      <div className="flex min-h-0 flex-1 items-center bg-[#333] pl-[8px] text-[13.700px] text-white">第 1 頁 (共 1 頁)</div>
    </div>
  );
}
